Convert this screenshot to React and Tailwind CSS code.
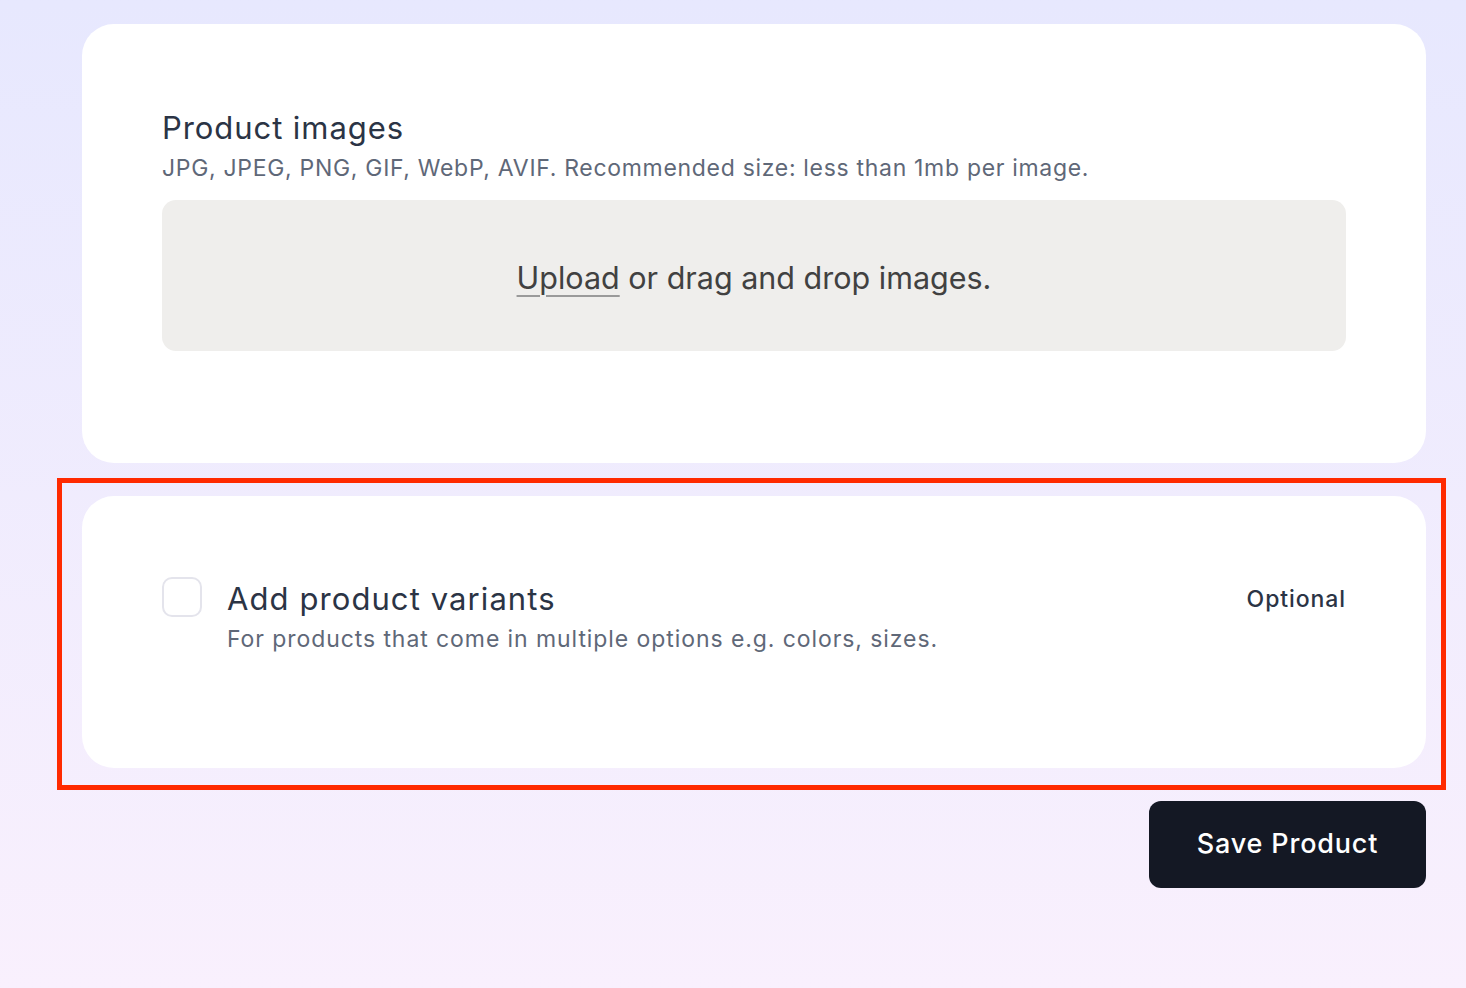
export default function App() {
  return (
    <div
      className="min-h-screen bg-gradient-to-b from-[#e7e8fe] to-[#f9f0fd] pl-[82px] pr-10 pt-6 pb-24"
      style={{ fontFamily: 'Inter, "Open Sans", sans-serif' }}
    >
      <div className="flex flex-col gap-[33px]">
        {/* images card */}
        <section className="rounded-[32px] bg-white px-20 pt-[80px] pb-[112px]">
          <h2 className="text-[31px] leading-[48px] text-[#2b3445] tracking-[0.03em]">Product images</h2>
          <p className="text-[23px] leading-[32px] text-[#5f6878] tracking-[0.03em]">
            JPG, JPEG, PNG, GIF, WebP, AVIF. Recommended size: less than 1mb per image.
          </p>
          <div className="mt-4 h-[151px] rounded-[14px] bg-[#efeeec] flex items-center justify-center">
            <p className="pt-[4px] text-[30.5px] text-[#414141]">
              <span className="underline decoration-[#9a9a9a] decoration-2 underline-offset-[6px]">Upload</span>{' '}
              or drag and drop images.
            </p>
          </div>
        </section>

        {/* variants card */}
        <div className="relative">
          <section className="rounded-[32px] bg-white px-20 pt-[80px] pb-[112px] flex items-start gap-[25px]">
            <button className="mt-[1px] w-10 h-10 shrink-0 rounded-[10px] border-2 border-[#e4e4ec] bg-white" />
            <div className="flex-1">
              <h2 className="text-[31px] leading-[46px] text-[#2b3445] tracking-[0.035em]">Add product variants</h2>
              <p className="text-[23px] leading-[34px] text-[#5f6878] tracking-[0.04em]">
                For products that come in multiple options e.g. colors, sizes.
              </p>
            </div>
            <span className="pt-[7px] text-[23px] leading-[32px] font-medium text-[#2b3445] tracking-[0.04em]">Optional</span>
          </section>
          <div className="pointer-events-none absolute -left-[25px] -right-[20px] -top-[18px] -bottom-[22px] border-[5px] border-[#ff2a00]" />
        </div>

        <div className="flex justify-end">
          <button className="h-[87px] w-[277px] rounded-[12px] bg-[#141824] text-white text-[27px] font-medium tracking-[0.03em]">
            Save Product
          </button>
        </div>
      </div>
    </div>
  )
}
